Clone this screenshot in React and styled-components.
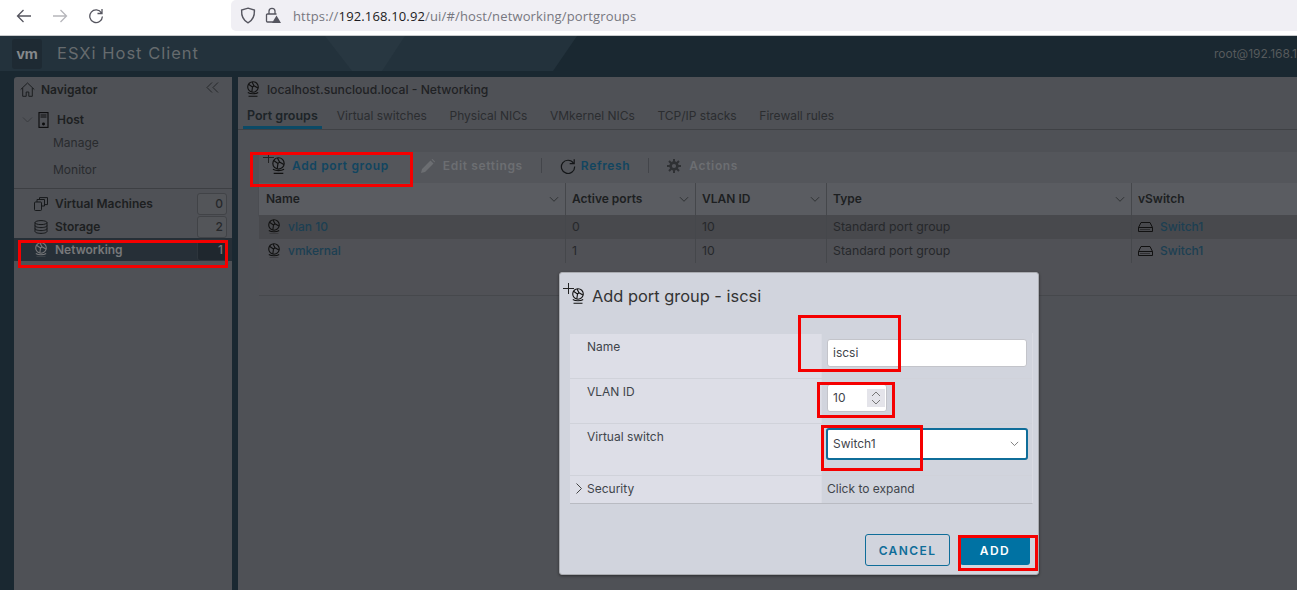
import React from 'react'
import styled, { createGlobalStyle } from 'styled-components'

const GlobalStyle = createGlobalStyle`
  html, body { margin: 0; padding: 0; height: 590px; overflow: hidden; background: #1a2831; }
  * { box-sizing: border-box; }
  body { font-family: Inter, "Open Sans", sans-serif; }
`

const Page = styled.div`
  position: relative;
  width: 1297px;
  height: 590px;
  overflow: hidden;
  display: flex;
  flex-direction: column;
`

/* browser chrome */
const BrowserBar = styled.div`
  height: 36px;
  flex: none;
  display: flex;
  background: #fff;
  border-bottom: 1px solid #c9cbcd;
`
const NavButtons = styled.div`
  width: 231px;
  display: flex;
  align-items: center;
  gap: 20px;
  padding: 0 0 4px 16px;
  color: #5b5b66;
`
const UrlBar = styled.div`
  flex: 1;
  height: 31px;
  background: #f0eff4;
  border-radius: 5px 0 0 5px;
  display: flex;
  align-items: center;
  padding-left: 9px;
  gap: 9px;
  color: #55555f;
`
const UrlText = styled.div`
  font-family: "Open Sans", sans-serif;
  font-size: 13px;
  letter-spacing: 0.15px;
  color: #77777f;
  margin-left: 3px;
  b { font-weight: 400; color: #1c1b22; }
`

/* ESXi header */
const Header = styled.div`
  position: relative;
  height: 40px;
  flex: none;
  display: flex;
  align-items: flex-start;
  background: #1a2831;
  padding: 3px 0 0 12px;
`
const HeaderArt = styled.svg`
  position: absolute;
  left: 0;
  top: 0;
`
const VmLogo = styled.div`
  position: relative;
  width: 30px;
  height: 30px;
  background: #1e2a33;
  border-radius: 3px;
  display: flex;
  align-items: center;
  justify-content: center;
  color: #85888b;
  font-family: "Liberation Sans", sans-serif;
  font-weight: 700;
  font-size: 15px;
  letter-spacing: -0.3px;
  padding-bottom: 2px;
`
const Brand = styled.div`
  position: relative;
  margin: 4px 0 0 15px;
  color: #666b6e;
  font-size: 16.5px;
  letter-spacing: 1px;
`
const User = styled.div`
  position: absolute;
  right: 0;
  top: 10px;
  white-space: nowrap;
  color: #565a5c;
  font-size: 12px;
`

const Body = styled.div`
  flex: 1;
  display: flex;
  gap: 6px;
  padding-left: 14px;
  padding-top: 1px;
  background: #1a2831;
`

/* navigator */
const Sidebar = styled.div`
  width: 218px;
  flex: none;
  background: #4f5156;
  color: #1d1f21;
  font-size: 12px;
  border-radius: 3px 0 0 0;
`
const SideTitle = styled.div`
  height: 24px;
  display: flex;
  align-items: center;
  padding: 0 13px 0 6px;
  gap: 6px;
  font-weight: 600;
  margin-bottom: 10px;
`
const Collapse = styled.span`
  margin-left: auto;
  display: flex;
  margin-top: -3px;
`
const HostRow = styled.div`
  height: 17px;
  display: flex;
  align-items: center;
  padding-left: 8px;
  gap: 5px;
  font-weight: 600;
  margin-bottom: 1px;
`
const HostLabel = styled.span`
  margin-left: 3px;
`
const SubItem = styled.div`
  height: 27px;
  padding-left: 39px;
  display: flex;
  align-items: center;
  color: #292b2e;
`
const Rule = styled.div`
  border-top: 1px solid #3d3f43;
  margin: 5px 0 3px;
`
const NavRow = styled.div`
  height: 23px;
  display: flex;
  align-items: center;
  padding: 0 5px 0 20px;
  gap: 7px;
  font-weight: 600;
  background: ${p => (p.$active ? '#262f37' : 'transparent')};
  color: ${p => (p.$active ? '#77787a' : '#1d1f21')};
`
const Badge = styled.span`
  margin-left: auto;
  width: 30px;
  height: 22px;
  border: 1px solid ${p => (p.$active ? '#2d353c' : '#414347')};
  border-radius: 3px;
  background: ${p => (p.$active ? '#1f272e' : '#535559')};
  color: ${p => (p.$active ? '#77787a' : '#26282b')};
  display: flex;
  align-items: center;
  justify-content: flex-end;
  padding-right: 3px;
  font-weight: 500;
`

/* main panel */
const Main = styled.div`
  flex: 1;
  min-width: 0;
  background: #4f5156;
  color: #1d1f21;
  font-size: 12px;
`
const PanelTitle = styled.div`
  height: 24px;
  display: flex;
  align-items: center;
  gap: 7px;
  padding-left: 8px;
  font-weight: 500;
  font-size: 12.2px;
  color: #1f2124;
`
const Tabs = styled.div`
  height: 29px;
  display: flex;
  border-bottom: 1px solid #3f4145;
  padding-left: 5px;
`
const Tab = styled.div`
  padding: 0 4px;
  margin-right: ${p => (p.$active ? 11 : 14.6)}px;
  display: flex;
  align-items: center;
  height: 28px;
  color: ${p => (p.$active ? '#1d2428' : '#2b2d30')};
  font-weight: ${p => (p.$active ? 600 : 400)};
  font-size: ${p => (p.$active ? 12.5 : 12)}px;
  box-shadow: ${p => (p.$active ? 'inset 0 -3px 0 #0c4a66' : 'none')};
`
const Content = styled.div`
  margin: 22px 0 0 21px;
  border-bottom: 1px solid #46484c;
`
const Toolbar = styled.div`
  height: 31px;
  display: flex;
  align-items: center;
  padding: 0 0 4px 4px;
  background: #54565b;
`
const ToolButton = styled.div`
  display: flex;
  align-items: center;
  gap: ${p => p.$gap}px;
  margin-left: ${p => p.$offset || 0}px;
  font-weight: 600;
  letter-spacing: 0.65px;
  color: ${p => (p.$disabled ? '#6c6e72' : '#114560')};
`
const ToolSep = styled.div`
  width: 1px;
  height: 15px;
  background: #43454a;
  margin: 0 18px;
`
const Row = styled.div`
  display: grid;
  grid-template-columns: 306px 130px 131px 305px 1fr;
  height: ${p => p.$h || 24}px;
  background: ${p => p.$bg};
  box-shadow: ${p => (p.$head ? '0 1px 1px #3c3e42' : 'none')};
  position: relative;
`
const Cell = styled.div`
  display: flex;
  align-items: center;
  padding: 0 ${p => (p.$first ? 7 : 6)}px 1px;
  gap: 7px;
  border-left: ${p => (p.$first ? 'none' : '1px solid #45474b')};
  color: #26282b;
  font-size: 12.3px;
`
const HeadCell = styled(Cell)`
  font-size: 12px;
  font-weight: 600;
  color: #1d1f21;
  justify-content: space-between;
  padding-right: 6px;
`
const LinkText = styled.span`
  color: #1c3f52;
  font-weight: 500;
  font-size: 12px;
`
const RowGlobe = styled.span`
  display: flex;
  margin-left: 1px;
`
const TableFill = styled.div`
  height: 32px;
  background: #505156;
`

/* modal */
const Modal = styled.div`
  position: absolute;
  left: 559px;
  top: 272px;
  width: 480px;
  height: 303px;
  background: #d1d4dd;
  border: 1px solid #a9abb0;
  border-radius: 3px;
  box-shadow: 0 1px 3px rgba(0, 0, 0, 0.45);
  padding: 0 5px 0 10px;
  display: flex;
  flex-direction: column;
`
const ModalTitle = styled.div`
  height: 60px;
  flex: none;
  display: flex;
  align-items: center;
  gap: 7px;
  margin-left: -7px;
  padding-bottom: 14px;
  color: #333;
  font-size: 16.4px;
  font-weight: 400;
`
const Form = styled.div`
  border-right: 1px solid #d9dbe3;
  border-bottom: 1px solid #b9bbc2;
`
const FormRow = styled.div`
  display: grid;
  grid-template-columns: 251px 1fr;
  height: ${p => p.$h}px;
  border-top: 1px solid ${p => (p.$first ? 'transparent' : '#d0d2da')};
`
const FormLabel = styled.div`
  background: #dddee7;
  color: #3f454b;
  font-size: 12px;
  padding: ${p => (p.$center ? '0 0 2px' : '5px 0 0')} 17px;
  display: flex;
  align-items: ${p => (p.$center ? 'center' : 'flex-start')};
  position: relative;
`
const FormValue = styled.div`
  padding: ${p => (p.$center ? '0 5px 2px' : '5px 5px 0')};
  color: #3f454b;
  font-size: 12px;
  display: flex;
  align-items: ${p => (p.$center ? 'center' : 'flex-start')};
  border-left: 1px solid #d9dbe3;
`
const TextInput = styled.div`
  width: 200px;
  height: 28px;
  background: #fff;
  border: 1px solid #c3c4ca;
  border-radius: 3px;
  display: flex;
  align-items: center;
  padding: 0 0 1px 5px;
`
const NumberInput = styled(TextInput)`
  width: 60px;
  justify-content: space-between;
  padding-right: 1px;
`
const Spinner = styled.div`
  width: 18px;
  height: 18px;
  background: #e4e4ea;
  color: #777;
  display: flex;
  align-items: center;
  justify-content: center;
`
const Select = styled.div`
  width: 202px;
  height: 32px;
  margin: -1px 0 0 -1px;
  background: #fff;
  border: 2px solid #0f6d99;
  border-radius: 3px;
  display: flex;
  align-items: center;
  justify-content: space-between;
  padding: 0 7px 2px 5px;
  color: #3f454b;
`
const Expander = styled.span`
  position: absolute;
  left: 3px;
  top: 7px;
  display: flex;
`
const Footer = styled.div`
  display: flex;
  justify-content: flex-end;
  align-items: center;
  gap: 10px;
  margin-top: 30px;
  padding-right: 3px;
`
const Button = styled.div`
  height: ${p => (p.$primary ? 30 : 32)}px;
  width: ${p => (p.$primary ? 70 : 85)}px;
  display: flex;
  align-items: center;
  justify-content: center;
  border-radius: 3px;
  font-size: 12px;
  font-weight: 600;
  letter-spacing: 1.4px;
  background: ${p => (p.$primary ? '#0072a3' : 'transparent')};
  color: ${p => (p.$primary ? '#fff' : '#0f6d99')};
  border: ${p => (p.$primary ? 'none' : '1px solid #0f6d99')};
`

/* red annotation boxes drawn over the screenshot */
const Mark = styled.div`
  position: absolute;
  left: ${p => p.$x}px;
  top: ${p => p.$y}px;
  width: ${p => p.$w}px;
  height: ${p => p.$h}px;
  border: 3px solid #f50000;
  pointer-events: none;
`

const Globe = ({ size = 15, color = '#111' }) => (
  <svg width={size} height={size * 1.14} viewBox="0 0 14 16" fill="none" stroke={color} strokeWidth="1.1">
    <circle cx="7" cy="6" r="5.3" />
    <path d="M2.5 3.3 6.5 6 5.8 11M6 .9 8 4.8l4 2.2M8 4.8 6.5 6" />
    <path d="M1.8 11.5c2.8 1.7 7.6 1.7 10.4 0M2.5 15.3h9" />
  </svg>
)

const PlusWrap = styled.span`
  display: flex;
  align-items: flex-start;
  flex: none;
  svg:first-child { margin: -5px -4px 0 0; flex: none; }
  svg:last-child { flex: none; }
`
const PlusGlobe = ({ size = 15 }) => (
  <PlusWrap>
    <svg width="12" height="12" viewBox="0 0 12 12" stroke="#222" strokeWidth="1" fill="none">
      <path d="M5.5 0v11M0 5.5h11" />
    </svg>
    <Globe size={size} />
  </PlusWrap>
)

const Chevron = ({ dir = 'down', size = 11, color = '#2c2e31' }) => {
  const d = { down: 'M1 3.5l4.5 4.5L10 3.5', right: 'M3.5 .5l5 5-5 5' }[dir]
  return (
    <svg width={size} height={size} viewBox="0 0 11 11" fill="none" stroke={color} strokeWidth="1">
      <path d={d} />
    </svg>
  )
}

const SwitchIcon = () => (
  <svg width="15" height="12" viewBox="0 0 15 12" fill="none" stroke="#111" strokeWidth="1">
    <path d="M3 1.5h9l2.5 5v4H.5v-4zM.5 6.5h14" />
    <path d="M2.5 8.5h10" strokeDasharray="1 1" />
  </svg>
)

const HomeIcon = () => (
  <svg width="15" height="15" viewBox="0 0 15 15" fill="none" stroke="#1c1e20" strokeWidth="1">
    <path d="M.7 7.5 7.5 1l6.8 6.5M2.700 6v8.300h3.500V10h2.600v4.300h3.500V6" />
  </svg>
)
const HostIcon = () => (
  <svg width="11" height="16" viewBox="0 0 11 16" fill="none" stroke="#0c0c0d" strokeWidth="1.1">
    <rect x="1" y=".6" width="9" height="14.8" />
    <path d="M2.5 3h6M2.5 5h6" />
    <circle cx="5.5" cy="12" r=".9" fill="#111" />
  </svg>
)
const VmIcon = () => (
  <svg width="14" height="14" viewBox="0 0 14 14" fill="none" stroke="#17191b" strokeWidth="1">
    <rect x=".5" y="5" width="7" height="8.5" rx="1" />
    <path d="M3 5V2.500h7.500V9H7.500M5.500 2.500V.6h8v7h-3" />
  </svg>
)
const StorageIcon = () => (
  <svg width="14" height="14" viewBox="0 0 14 14" fill="none" stroke="#17191b" strokeWidth="1">
    <ellipse cx="7" cy="2.6" rx="6" ry="2" />
    <path d="M1 2.600v8.800c0 1.100 2.700 2 6 2s6-.9 6-2V2.600M1 5.600c0 1.100 2.700 2 6 2s6-.9 6-2M1 8.600c0 1.100 2.700 2 6 2s6-.9 6-2" />
  </svg>
)
const PencilIcon = () => (
  <svg width="14" height="14" viewBox="0 0 14 14" fill="#6c6e72">
    <path d="M0 14l1-4L9.500 1.500l3 3L4 13zM10.500.5 11.500 0 14 2.500l-.5 1z" />
  </svg>
)
const RefreshIcon = () => (
  <svg width="16" height="16" viewBox="0 0 16 16" fill="none" stroke="#141618" strokeWidth="1.2">
    <path d="M13.500 5.200A6.600 6.600 0 1 0 14.600 8.500" />
    <path d="M14.200 1.200v4.500H9.700" />
  </svg>
)
const GearIcon = () => (
  <svg width="14" height="14" viewBox="0 0 14 14" fill="none" stroke="#2f3134">
    <circle cx="7" cy="7" r="3.4" strokeWidth="2.6" />
    <path d="M7 0v3M7 11v3M0 7h3M11 7h3M2 2l2.200 2.200M9.800 9.800 12 12M12 2 9.800 4.200M4.200 9.800 2 12" strokeWidth="2" />
  </svg>
)
const ShieldIcon = () => (
  <svg width="16" height="17" viewBox="0 0 16 17" fill="none" stroke="#55555f" strokeWidth="1.4">
    <path d="M8 1.200 14.400 3c.3 6-1.600 10.400-6.400 12.800C3.200 13.400 1.300 9 1.600 3z" />
  </svg>
)
const LockIcon = () => (
  <svg width="16" height="17" viewBox="0 0 16 17" fill="none" stroke="#55555f" strokeWidth="1.3">
    <path d="M4 7V4.300a3 3 0 0 1 6 0V7M8 15H2.500A1 1 0 0 1 1.500 14V8a1 1 0 0 1 1-1h9" />
    <path d="M11.500 8.500 16 16H7z" fill="#55555f" stroke="none" />
  </svg>
)
const ArrowSvg = styled.svg`
  transform: ${p => (p.$flip ? 'scaleX(-1)' : 'none')};
`
const ArrowIcon = ({ flip, color }) => (
  <ArrowSvg $flip={flip} width="16" height="16" viewBox="0 0 16 16" fill="none" stroke={color} strokeWidth="1.3">
    <path d="M15 8H1.500M7.500 2 1.500 8l6 6" />
  </ArrowSvg>
)

const columns = ['Name', 'Active ports', 'VLAN ID', 'Type']
const rows = [
  { name: 'vlan 10', active: '0', bg: '#48494d' },
  { name: 'vmkernal', active: '1', bg: '#505156' },
]
const tabs = ['Port groups', 'Virtual switches', 'Physical NICs', 'VMkernel NICs', 'TCP/IP stacks', 'Firewall rules']
const marks = [
  { x: 250, y: 152, w: 163, h: 35 },
  { x: 18, y: 240, w: 210, h: 28 },
  { x: 798, y: 315, w: 103, h: 57 },
  { x: 817, y: 382, w: 78, h: 36 },
  { x: 821, y: 425, w: 102, h: 46 },
  { x: 958, y: 535, w: 80, h: 36 },
]

export default function App() {
  return (
    <Page>
      <GlobalStyle />
      <BrowserBar>
        <NavButtons>
          <ArrowIcon color="#55555f" />
          <ArrowIcon flip color="#b6b6bb" />
          <svg width="16" height="16" viewBox="0 0 16 16" fill="none" stroke="#55555f" strokeWidth="1.3">
            <path d="M13.500 5A6.300 6.300 0 1 0 14.400 8.500M14 1v4.500H9.500" />
          </svg>
        </NavButtons>
        <UrlBar>
          <ShieldIcon />
          <LockIcon />
          <UrlText>https://<b>192.168.10.92</b>/ui/#/host/networking/portgroups</UrlText>
        </UrlBar>
      </BrowserBar>

      <Header>
        <HeaderArt width="1297" height="40" viewBox="0 0 1297 40">
          <path d="M0 0H577L553 35H0z" fill="#23323c" />
          <path d="M325 0H405L382 35H352z" fill="#283741" />
        </HeaderArt>
        <VmLogo>vm</VmLogo>
        <Brand>ESXi Host Client</Brand>
        <User>root@192.168.1</User>
      </Header>

      <Body>
        <Sidebar>
          <SideTitle>
            <HomeIcon />
            Navigator
            <Collapse>
              <svg width="13" height="11" viewBox="0 0 13 11" fill="none" stroke="#26282b">
                <path d="M6 .5 1 5.500l5 5M12 .5l-5 5 5 5" />
              </svg>
            </Collapse>
          </SideTitle>
          <HostRow>
            <Chevron color="#3a3c40" />
            <HostIcon />
            <HostLabel>Host</HostLabel>
          </HostRow>
          <SubItem>Manage</SubItem>
          <SubItem>Monitor</SubItem>
          <Rule />
          <NavRow>
            <VmIcon />
            Virtual Machines
            <Badge>0</Badge>
          </NavRow>
          <NavRow>
            <StorageIcon />
            Storage
            <Badge>2</Badge>
          </NavRow>
          <NavRow $active>
            <Globe size={14} color="#77787a" />
            Networking
            <Badge $active>1</Badge>
          </NavRow>
        </Sidebar>

        <Main>
          <PanelTitle>
            <Globe size={14} />
            localhost.suncloud.local - Networking
          </PanelTitle>
          <Tabs>
            {tabs.map((t, i) => (
              <Tab key={t} $active={i === 0}>{t}</Tab>
            ))}
          </Tabs>
          <Content>
            <Toolbar>
              <ToolButton $gap={6}>
                <PlusGlobe />
                Add port group
              </ToolButton>
              <ToolButton $disabled $offset={32} $gap={8}>
                <PencilIcon />
                Edit settings
              </ToolButton>
              <ToolSep />
              <ToolButton $gap={5}>
                <RefreshIcon />
                Refresh
              </ToolButton>
              <ToolSep />
              <ToolButton $disabled $gap={8}>
                <GearIcon />
                Actions
              </ToolButton>
            </Toolbar>
            <Row $h={32} $bg="#5a5c61" $head>
              {columns.map((c, i) => (
                <HeadCell key={c} $first={i === 0}>
                  {c}
                  <Chevron size={10} />
                </HeadCell>
              ))}
              <HeadCell>vSwitch</HeadCell>
            </Row>
            {rows.map(r => (
              <Row key={r.name} $bg={r.bg}>
                <Cell $first>
                  <RowGlobe><Globe size={14} /></RowGlobe>
                  <LinkText>{r.name}</LinkText>
                </Cell>
                <Cell>{r.active}</Cell>
                <Cell>10</Cell>
                <Cell>Standard port group</Cell>
                <Cell>
                  <SwitchIcon />
                  <LinkText>Switch1</LinkText>
                </Cell>
              </Row>
            ))}
            <TableFill />
          </Content>
        </Main>
      </Body>

      <Modal>
        <ModalTitle>
          <PlusGlobe size={14} />
          Add port group - iscsi
        </ModalTitle>
        <Form>
          <FormRow $h={45} $first>
            <FormLabel>Name</FormLabel>
            <FormValue>
              <TextInput>iscsi</TextInput>
            </FormValue>
          </FormRow>
          <FormRow $h={45}>
            <FormLabel>VLAN ID</FormLabel>
            <FormValue>
              <NumberInput>
                10
                <Spinner>
                  <svg width="10" height="16" viewBox="0 0 10 16" fill="none" stroke="#777">
                    <path d="M1 6l4-4 4 4M1 10l4 4 4-4" />
                  </svg>
                </Spinner>
              </NumberInput>
            </FormValue>
          </FormRow>
          <FormRow $h={52}>
            <FormLabel>Virtual switch</FormLabel>
            <FormValue>
              <Select>
                Switch1
                <Chevron size={9} color="#666" />
              </Select>
            </FormValue>
          </FormRow>
          <FormRow $h={28}>
            <FormLabel $center>
              <Expander><Chevron dir="right" color="#444" /></Expander>
              Security
            </FormLabel>
            <FormValue $center>Click to expand</FormValue>
          </FormRow>
        </Form>
        <Footer>
          <Button>CANCEL</Button>
          <Button $primary>ADD</Button>
        </Footer>
      </Modal>

      {marks.map(m => (
        <Mark key={m.x} $x={m.x} $y={m.y} $w={m.w} $h={m.h} />
      ))}
    </Page>
  )
}
